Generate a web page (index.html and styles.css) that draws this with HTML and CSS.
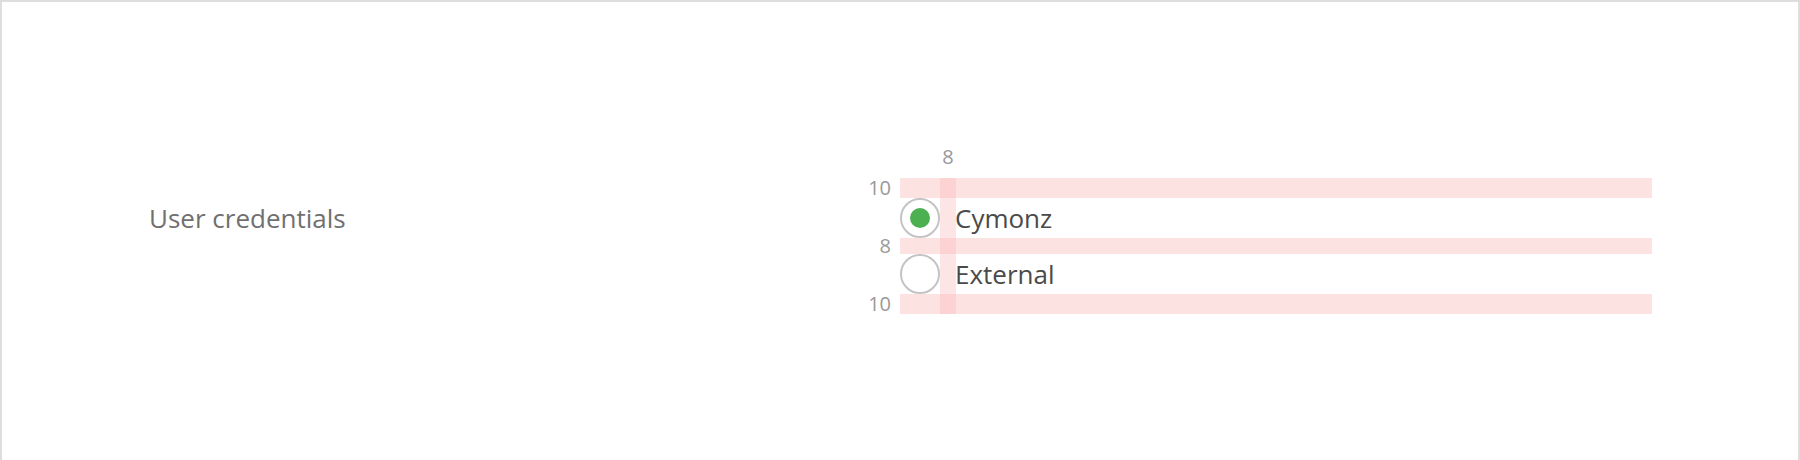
FILE: index.html
```html
<!DOCTYPE html>
<html>
<head>
<meta charset="utf-8">
<link rel="stylesheet" href="styles.css">
</head>
<body>
<div class="frame">
  <div class="form-row">
    <div class="label-col">User credentials</div>
    <div class="field-col">
      <div class="spec-v"><span class="note note-top">8</span></div>
      <div class="band band-10"><span class="note note-left">10</span></div>
      <label class="radio-row">
        <span class="radio checked"><span class="dot"></span></span>
        <span class="radio-text">Cymonz</span>
      </label>
      <div class="band band-8"><span class="note note-left">8</span></div>
      <label class="radio-row">
        <span class="radio"></span>
        <span class="radio-text">External</span>
      </label>
      <div class="band band-10"><span class="note note-left">10</span></div>
    </div>
  </div>
</div>
</body>
</html>
```
FILE: styles.css
```css
html, body {
  margin: 0;
  padding: 0;
  background: #ffffff;
}
body {
  font-family: "Open Sans", "Noto Sans", sans-serif;
}
.frame {
  box-sizing: border-box;
  width: 1800px;
  height: 460px;
  border: 2px solid #dedede;
  border-bottom: none;
  background: #fff;
  padding-top: 176px;
}
.form-row {
  display: flex;
  align-items: flex-start;
}
.label-col {
  box-sizing: border-box;
  width: 898px;
  padding-left: 147px;
  margin-top: 20px;
  height: 40px;
  line-height: 40px;
  font-size: 26px;
  color: #707070;
}
.field-col {
  position: relative;
  width: 752px;
  display: flex;
  flex-direction: column;
}
.band {
  position: relative;
  background: #fde2e2;
}
.band-10 { height: 20px; }
.band-8 { height: 16px; }
.spec-v {
  position: absolute;
  left: 40px;
  top: 0;
  bottom: 0;
  width: 16px;
  background: rgba(250, 180, 180, 0.35);
  z-index: 2;
}
.note {
  position: absolute;
  font-size: 20px;
  line-height: 24px;
  color: #999999;
  white-space: nowrap;
}
.note-left {
  right: calc(100% + 9px);
  top: 50%;
  transform: translateY(-50%);
}
.note-top {
  bottom: calc(100% + 9px);
  left: 50%;
  transform: translateX(-50%);
}
.radio-row {
  display: flex;
  align-items: center;
  height: 40px;
}
.radio {
  box-sizing: border-box;
  width: 40px;
  height: 40px;
  border-radius: 50%;
  border: 2px solid #c4c4c4;
  background: #fff;
  display: flex;
  align-items: center;
  justify-content: center;
  flex: none;
}
.dot {
  width: 20px;
  height: 20px;
  border-radius: 50%;
  background: #4caf50;
}
.radio-text {
  margin-left: 15px;
  font-size: 26px;
  line-height: 40px;
  color: #4a4a4a;
}
```
